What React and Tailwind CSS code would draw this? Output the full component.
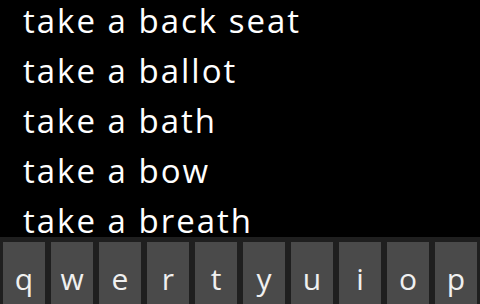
export default function App() {
  const items = ["take a back seat", "take a ballot", "take a bath", "take a bow", "take a breath"];
  const keys = ["q", "w", "e", "r", "t", "y", "u", "i", "o", "p"];
  return (
    <div className="w-[480px] h-[304px] bg-black flex flex-col overflow-hidden" style={{ fontFamily: '"Open Sans", "Noto Sans", sans-serif' }}>
      <div className="h-[237px] shrink-0 overflow-hidden pl-[23px]">
        <div className="mt-[-4px] flex flex-col">
          {items.map((t) => (
            <div key={t} className="h-[50px] leading-[50px] text-[33px] tracking-[2px] text-white whitespace-nowrap">{t}</div>
          ))}
        </div>
      </div>
      <div className="flex-1 min-h-0 overflow-hidden bg-[#1f1f1f] pt-[5px] px-[3px] flex gap-[6px]">
        {keys.map((k) => (
          <div key={k} className="w-[42px] h-[80px] shrink-0 bg-[#4a4a4a] flex justify-center pt-[22px]">
            <span className="text-[30px] leading-[30px] text-[#f0f0f0]">{k}</span>
          </div>
        ))}
      </div>
    </div>
  );
}
